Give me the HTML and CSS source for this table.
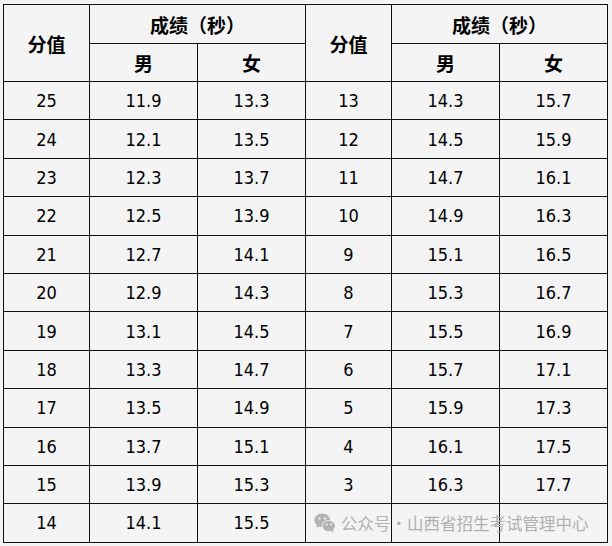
FILE: index.html
```html
<!DOCTYPE html>
<html lang="zh-CN">
<head>
<meta charset="utf-8">
<title>成绩表</title>
<link rel="stylesheet" href="styles.css">
</head>
<body>
<div class="page">
  <table class="score">
    <colgroup>
      <col class="c-score"><col class="c-val"><col class="c-val">
      <col class="c-score"><col class="c-val"><col class="c-val">
    </colgroup>
    <thead>
      <tr class="h1">
        <th rowspan="2">分值</th>
        <th colspan="2">成绩（秒）</th>
        <th rowspan="2">分值</th>
        <th colspan="2">成绩（秒）</th>
      </tr>
      <tr class="h2">
        <th>男</th><th>女</th>
        <th>男</th><th>女</th>
      </tr>
    </thead>
    <tbody>
      <tr><td>25</td><td>11.9</td><td>13.3</td><td>13</td><td>14.3</td><td>15.7</td></tr>
      <tr><td>24</td><td>12.1</td><td>13.5</td><td>12</td><td>14.5</td><td>15.9</td></tr>
      <tr><td>23</td><td>12.3</td><td>13.7</td><td>11</td><td>14.7</td><td>16.1</td></tr>
      <tr><td>22</td><td>12.5</td><td>13.9</td><td>10</td><td>14.9</td><td>16.3</td></tr>
      <tr><td>21</td><td>12.7</td><td>14.1</td><td>9</td><td>15.1</td><td>16.5</td></tr>
      <tr><td>20</td><td>12.9</td><td>14.3</td><td>8</td><td>15.3</td><td>16.7</td></tr>
      <tr><td>19</td><td>13.1</td><td>14.5</td><td>7</td><td>15.5</td><td>16.9</td></tr>
      <tr><td>18</td><td>13.3</td><td>14.7</td><td>6</td><td>15.7</td><td>17.1</td></tr>
      <tr><td>17</td><td>13.5</td><td>14.9</td><td>5</td><td>15.9</td><td>17.3</td></tr>
      <tr><td>16</td><td>13.7</td><td>15.1</td><td>4</td><td>16.1</td><td>17.5</td></tr>
      <tr><td>15</td><td>13.9</td><td>15.3</td><td>3</td><td>16.3</td><td>17.7</td></tr>
      <tr><td>14</td><td>14.1</td><td>15.5</td><td></td><td></td><td></td></tr>
    </tbody>
  </table>
  <div class="watermark">
    <svg class="wx" width="22" height="20" viewBox="0 0 22 20" aria-hidden="true">
      <ellipse cx="8.2" cy="7.2" rx="7.9" ry="6.7" fill="#b3b3b3"/>
      <path d="M3.2 11.6 L2.4 14.8 L6.4 13 Z" fill="#b3b3b3"/>
      <circle cx="5.5" cy="5.6" r="1.15" fill="#f3f4f3"/>
      <circle cx="10.9" cy="5.6" r="1.15" fill="#f3f4f3"/>
      <ellipse cx="14.8" cy="13" rx="7" ry="6" fill="#f3f4f3"/>
      <ellipse cx="14.8" cy="13" rx="6.2" ry="5.3" fill="#b3b3b3"/>
      <path d="M18.2 16.6 L20 19.4 L16.2 17.8 Z" fill="#b3b3b3"/>
      <circle cx="12.7" cy="11.5" r="1" fill="#f3f4f3"/>
      <circle cx="17" cy="11.5" r="1" fill="#f3f4f3"/>
    </svg>
    <span class="wm-text">公众号·山西省招生考试管理中心</span>
  </div>
</div>
</body>
</html>
```
FILE: styles.css
```css
html, body {
  margin: 0;
  padding: 0;
  background: #f3f4f3;
}
.page {
  position: relative;
  width: 612px;
  height: 546px;
  padding: 4px 0 0 3px;
  box-sizing: border-box;
}
.score {
  border-collapse: collapse;
  table-layout: fixed;
  width: 604px;
  font-family: "DejaVu Sans Condensed", "DejaVu Sans", sans-serif;
  font-stretch: condensed;
  font-size: 18px;
  color: #000;
}
.c-score { width: 86px; }
.c-val { width: 108px; }
.score th,
.score td {
  border: 1px solid #111;
  text-align: center;
  vertical-align: middle;
  padding: 0;
}
.score th {
  font-family: "Noto Sans CJK SC", sans-serif;
  font-weight: 700;
  font-size: 19px;
}
.h1 { height: 39px; }
.h2 { height: 38px; }
.score tbody tr { height: 38.4px; }
.watermark {
  position: absolute;
  left: 314px;
  top: 513px;
  display: flex;
  align-items: center;
  gap: 5px;
  color: #b0b0b0;
  font-family: "Noto Sans CJK SC", sans-serif;
  font-size: 16.5px;
  line-height: 20px;
}
.wx { display: block; }
```
